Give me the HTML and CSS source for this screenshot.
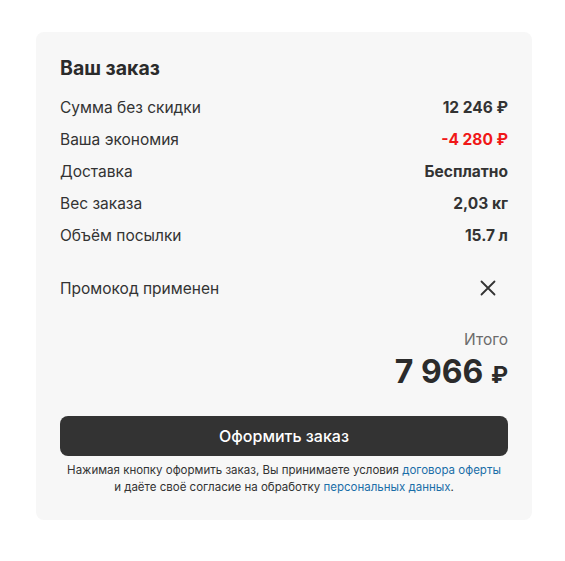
FILE: index.html
```html
<!DOCTYPE html>
<html lang="ru">
<head>
<meta charset="utf-8">
<link rel="stylesheet" href="styles.css">
</head>
<body>
<div class="card">
  <h2 class="title">Ваш заказ</h2>
  <div class="rows">
    <div class="row"><span>Сумма без скидки</span><span class="val">12 246 ₽</span></div>
    <div class="row"><span>Ваша экономия</span><span class="val red">-4 280 ₽</span></div>
    <div class="row"><span>Доставка</span><span class="val">Бесплатно</span></div>
    <div class="row"><span>Вес заказа</span><span class="val">2,03 кг</span></div>
    <div class="row"><span>Объём посылки</span><span class="val">15.7 л</span></div>
  </div>
  <div class="promo">
    <span>Промокод применен</span>
    <svg class="close" width="16" height="16" viewBox="0 0 16 16"><path d="M1.5 1.5 L14.5 14.5 M14.5 1.5 L1.5 14.5" stroke="#333" stroke-width="1.8" stroke-linecap="round" fill="none"/></svg>
  </div>
  <div class="total">
    <div class="total-label">Итого</div>
    <div class="total-sum">7 966 <span class="rub">₽</span></div>
  </div>
  <button class="btn">Оформить заказ</button>
  <p class="note">Нажимая кнопку оформить заказ, Вы принимаете условия <a href="#">договора оферты</a><br>и даёте своё согласие на обработку <a href="#">персональных данных</a>.</p>
</div>
</body>
</html>
```

FILE: styles.css
```css
* { box-sizing: border-box; }
body {
  margin: 0;
  background: #fff;
  font-family: Inter, "Noto Sans", sans-serif;
  color: #333;
}
.card {
  margin: 32px 0 0 36px;
  width: 496px;
  background: #f7f7f7;
  border-radius: 8px;
  padding: 24px 24px 24px 24px;
}
.title {
  margin: 0;
  font-size: 19.5px;
  line-height: 24px;
  font-weight: 700;
  color: #2b2b2b;
}
.rows {
  margin-top: 11px;
  display: flex;
  flex-direction: column;
}
.row {
  height: 32px;
  display: flex;
  align-items: center;
  justify-content: space-between;
  font-size: 15.5px;
}
.val {
  font-weight: 700;
  color: #333;
}
.red { color: #f01818; }
.promo {
  margin-top: 21px;
  height: 32px;
  display: flex;
  align-items: center;
  justify-content: space-between;
  font-size: 15.5px;
  padding-right: 12px;
}
.close { display: block; }
.total {
  margin-top: 24px;
  text-align: right;
}
.total-label {
  font-size: 15.5px;
  line-height: 24px;
  color: #6b6b6b;
}
.total-sum {
  height: 40px;
  font-size: 32px;
  line-height: 40px;
  font-weight: 700;
  color: #2b2b2b;
}
.rub { font-size: 23px; line-height: 24px; }
.btn {
  display: block;
  width: 100%;
  margin-top: 24px;
  height: 40px;
  border: 0;
  border-radius: 8px;
  background: #333;
  color: #fff;
  font-family: inherit;
  font-size: 16px;
  font-weight: 500;
}
.note {
  margin: 6px 0 0;
  text-align: center;
  font-size: 11.5px;
  line-height: 17px;
  color: #333;
}
.note a { color: #1a6ea8; text-decoration: none; }
```
